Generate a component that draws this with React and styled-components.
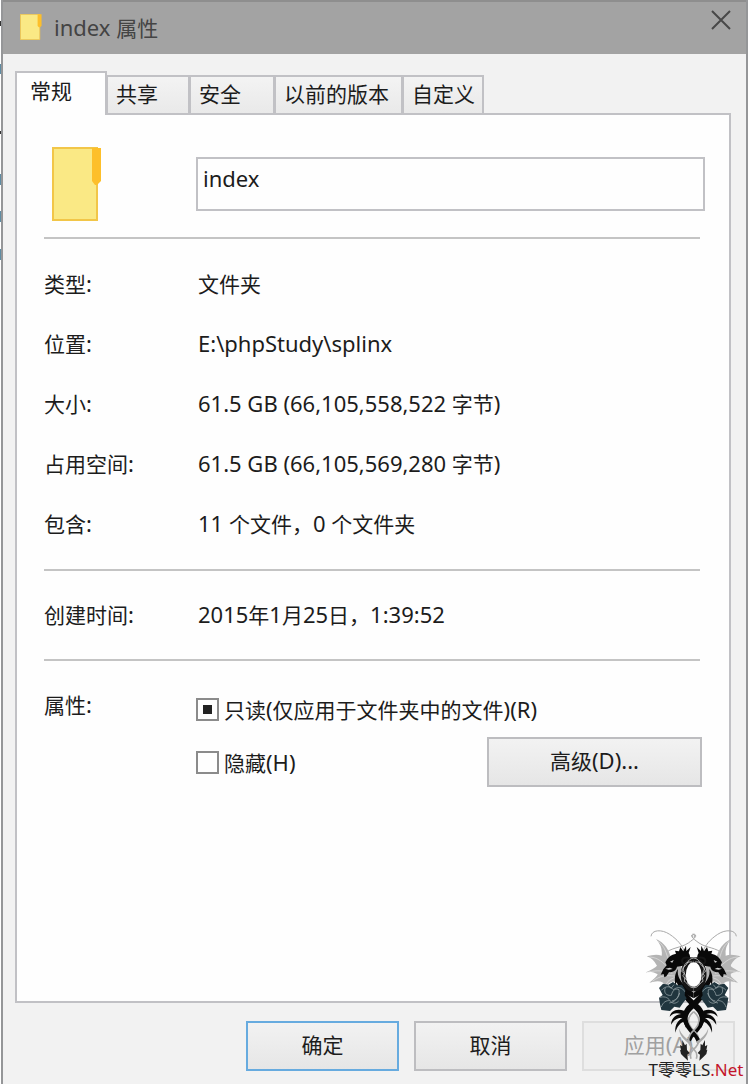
import React, { useEffect, useRef } from 'react';
import styled, { createGlobalStyle, css } from 'styled-components';

const GlobalStyle = createGlobalStyle`
  *, *::before, *::after { box-sizing: border-box; }
  body {
    margin: 0;
    background: #fff;
    color: #1c1c1c;
    font: 21px/30px "Noto Sans CJK SC", "Noto Sans", sans-serif;
  }
  button, input { font: inherit; color: inherit; }
`;

const line = '#c1c1c5';

const Desktop = styled.div`
  position: relative;
  display: grid;
  grid-template-columns: 1px minmax(0, 1fr) 2px;
  min-height: 100vh;
`;

const Behind = styled.div`
  background: linear-gradient(
    #fff 21px, #333 21px 26px, #fff 26px 64px, #5f8ca3 64px 74px, #fff 74px 131px,
    #333 131px 134px, #fff 134px 174px, #5f8ca3 174px 185px, #fff 185px 211px,
    #5f8ca3 211px 222px, #fff 222px 249px, #5f8ca3 249px 260px, #fff 260px
  );
`;

const Window = styled.main`
  display: flex;
  flex-direction: column;
  border: solid #959698;
  border-width: 0 2px;
  background: #f2f2f2;
`;

const TitleBar = styled.header`
  display: flex;
  align-items: center;
  gap: 12px;
  height: 54px;
  padding: 0 14px 2px 17px;
  border-top: 2px solid #8e8e8e;
  background: #a3a3a3;
  color: #444;
`;

const Title = styled.h1`
  flex: 1;
  margin: 0;
  font-size: 21px;
  font-weight: 400;
`;

const CloseButton = styled.button`
  display: flex;
  align-self: flex-start;
  margin-top: 7px;
  padding: 0;
  border: 0;
  background: none;
`;

const Body = styled.div`
  flex: 1;
  display: flex;
  flex-direction: column;
  padding: 17px 11px 13px 12px;
`;

const Tabs = styled.div`
  display: flex;
  align-items: flex-end;
  margin-bottom: -2px;
`;

const Tab = styled.button`
  height: 40px;
  margin-left: -1px;
  padding: 0 8px 4px;
  width: ${p => p.$width}px;
  border: 2px solid ${line};
  background: linear-gradient(#f3f3f3, #e9e9e9);
  text-align: left;
  white-space: nowrap;
  ${p => p.$active && css`
    z-index: 1;
    height: 44px;
    margin-left: 0;
    padding: 0 13px 8px;
    border-bottom: 0;
    background: #fefefe;
  `}
`;

const Panel = styled.section`
  flex: 1;
  margin-right: 4px;
  padding: 31px 24px 24px 27px;
  border: 2px solid ${line};
  background: #fefefe;
`;

const Row = styled.div`
  display: grid;
  grid-template-columns: 152px minmax(0, 1fr);
  align-items: center;
`;

const HeadRow = styled(Row)`
  height: 76px;
  margin-bottom: 15px;
`;

const FolderCell = styled.div`
  display: flex;
  padding-left: 8px;
`;

const NameInput = styled.input`
  width: 100%;
  height: 54px;
  padding: 0 5px 12px;
  border: 2px solid ${line};
  border-radius: 0;
  background: #fefefe;
  font-family: "Noto Sans", sans-serif;
  font-size: 22px;
  outline: 0;
`;

const Divider = styled.hr`
  height: 2px;
  margin: 0 5px 0 0;
  border: 0;
  background: #c4c4c4;
`;

const Facts = styled.dl`
  margin: 0;
  padding: ${p => p.$pad};
`;

const Fact = styled(Row)`
  height: 60px;
  dt, dd { margin: 0; }
  dd { padding-left: 2px; }
`;

const LatinText = styled.span`
  font-family: "Noto Sans", sans-serif;
  font-size: 22px;
`;

const Attributes = styled(Row)`
  align-items: start;
  padding-top: 28px;
`;

const Options = styled.div`
  display: flex;
  flex-direction: column;
  padding-top: 5px;
`;

const OptionRow = styled.div`
  display: flex;
  align-items: center;
  justify-content: space-between;
  height: ${p => p.$tall ? 50 : 30}px;
  margin-top: ${p => p.$tall ? 13 : 0}px;
  padding-right: 3px;
`;

const CheckLabel = styled.label`
  display: flex;
  align-items: center;
  gap: 5px;
  white-space: nowrap;
`;

const Check = styled.input`
  appearance: none;
  width: 23px;
  height: 23px;
  margin: 0;
  border: 2px solid #8b8b8b;
  background: #fefefe;
  &:indeterminate {
    background: linear-gradient(#222, #222) center / 9px 9px no-repeat #fefefe;
  }
`;

const PushButton = styled.button`
  width: ${p => p.$wide ? 215 : 153}px;
  height: 50px;
  padding: 0 0 4px;
  border: 2px solid ${p => p.$primary ? '#67abdf' : '#bdbdc0'};
  background: linear-gradient(#f2f2f2, #e6e6e6);
  &:disabled {
    border-color: #dedede;
    background: #efefef;
    color: #a0a0a0;
  }
`;

const Footer = styled.footer`
  display: flex;
  justify-content: flex-end;
  gap: 15px;
  padding-top: 18px;
`;

const Watermark = styled.div`
  position: absolute;
  right: 4px;
  bottom: 5px;
  display: flex;
  flex-direction: column;
  align-items: center;
  width: 100px;
  pointer-events: none;
`;

const Brand = styled.div`
  color: #222;
  font: 17px/18px "Noto Sans", "Noto Sans CJK SC", sans-serif;
  white-space: nowrap;
  b { color: #c4142b; font-weight: 400; }
`;

function Mixed({ children }) {
  return children.split(/([\x20-\x7e]+)/).filter(Boolean).map((part, i) =>
    /^[\x20-\x7e]+$/.test(part) ? <LatinText key={i}>{part}</LatinText> : part
  );
}

function CheckBox({ label, mixed }) {
  const box = useRef(null);
  useEffect(() => { box.current.indeterminate = Boolean(mixed); }, [mixed]);
  return (
    <CheckLabel>
      <Check ref={box} type="checkbox" />
      <span><Mixed>{label}</Mixed></span>
    </CheckLabel>
  );
}

function FolderIcon({ width, height }) {
  return (
    <svg width={width} height={height} viewBox="0 0 50 74" preserveAspectRatio="none" aria-hidden="true">
      <path d="M1 1h44v72H1z" fill="#fae985" stroke="#f2c648" strokeWidth="2" />
      <path d="M40 1h9v33l-4 4h-2l-3-4z" fill="#fdbf2a" />
    </svg>
  );
}

function DragonHalf() {
  return (
    <g id="dragon-half">
      <g fill="none" stroke="#a9a9a9" strokeWidth="3">
        <path d="M60 64C62 44 92 42 116 58c24 16 36 32 44 50" />
        <path d="M98 118c24-22 50-18 74-34 8-6 20-14 22-20 2-10-14-8-8 4" />
      </g>
      <path d="M75 72C100 82 115 105 120 130L150 150 160 190 148 205Q125 190 104 214 95 190 55 203 78 185 80 178 62 166 43 173 70 160 78 152 66 130 47 124 75 116 92 122 96 95 75 72z" fill="#b4b4b4" />
      <g fill="none" stroke="#e4e4e4" strokeWidth="2">
        <path d="M82 79c20 16 24 36 30 56M56 126c28 2 40 18 56 32M52 171c28-6 46-4 72 4M64 199c24-18 42-18 66-16M106 207c6-12 16-18 32-20" />
      </g>
      <path d="M97 163l10-12-4-9c7-15 18-23 32-26l-3-9 12 2 4-13 9 13 8-17 1 16 13-12-6 18c7 9 5 21-5 28-5 10-17 13-30 13-2 11-12 17-24 17l-8 12-6 3-2-10-9 2z" fill="#090909" />
      <path d="M117 140l11-5-4 8z" fill="#d0d0d0" />
      <path d="M103 161l14-3 8 4-12 2z" fill="#d0d0d0" />
      <path d="M141 162c-4 22 8 38 25 54l22 17v17c-24-12-42-22-51-48l-4 9c-3-20-2-34 8-49z" fill="#090909" />
      <path d="M188 134c-20 0-31 22-31 46s12 42 31 42" fill="none" stroke="#161616" strokeWidth="15" />
      <path d="M188 136c-12-10-30-12-34-2-4 12 10 18 20 8 6-6 10-8 14-8" fill="none" stroke="#161616" strokeWidth="6" />
      <path d="M188 129c-22 4-14 18-28 25-12 9 8 17-4 27 2 12 16 10 14 22 5 9 12 10 18 12M184 141c-28-2-20 12-32 28 18 10 8 20 8 30 10 4 14 20 28 19" fill="none" stroke="#f2f2f2" strokeWidth="2" />
      <path d="M141 219c18 6 30 20 48 38 25 18 34 35 31 54-2 23-18 38-35 57l-9 18-8-11c7-18 37-38 38-62 1-17-13-29-29-43l-35-38z" fill="#080808" />
      <path d="M188 290c-22 18-20 38 0 56 20 18 20 40 0 56-8 8-12 18-8 29" fill="none" stroke="#aaa" strokeWidth="5" />
      <path d="M159 287c-24-8-40 2-43 18 10-11 21-13 34-8-18 1-30 16-30 32 10-16 20-22 34-20-15 9-23 22-21 44 5-18 13-28 24-33l8 18 8-8-8-25z" fill="#090909" />
      <path d="M144 340c1 22 14 34 32 48l5-8c-16-9-30-20-37-40z" fill="#aaa" />
      <path d="M154 375l8 16 5-5 1 19 8 9-7 5 2 18-12-11-9-9-3-13 3 2-3-16 7 4z" fill="#222" />
      <path d="M84 219l12-13 16 3 14-8 14 10 13-2 10 16-2 16 6 9-11 14-10 14-16-3-13 13-26-3-4-17-3-20 11-8z" fill="#20353e" />
      <g fill="none" stroke="#a5b0b4" strokeWidth="2">
        <path d="M91 226c12-14 27-14 36-2 13-10 27-8 34 6M103 218c-6 15 3 25 18 23 4-17 12-21 23-17 2 18-6 31-21 34M85 248c13-5 25-2 32 9 7 10 17 10 26 1M146 234c-5 18-16 27-31 30M91 276c5-15 15-20 25-19M112 211l8 9 9-11" />
      </g>
    </g>
  );
}

const tabs = [
  ['常规', 92], ['共享', 84], ['安全', 86], ['以前的版本', 129], ['自定义', 82],
];

const facts = [
  ['类型:', '文件夹'],
  ['位置:', 'E:\\phpStudy\\splinx'],
  ['大小:', '61.5 GB (66,105,558,522 字节)'],
  ['占用空间:', '61.5 GB (66,105,569,280 字节)'],
  ['包含:', '11 个文件，0 个文件夹'],
];

export default function App() {
  return (
    <Desktop>
      <GlobalStyle />
      <Behind />
      <Window>
        <TitleBar>
          <FolderIcon width={22} height={26} />
          <Title><Mixed>index 属性</Mixed></Title>
          <CloseButton aria-label="关闭">
            <svg width="22" height="22" viewBox="0 0 22 22" fill="none" stroke="#484848" strokeWidth="2">
              <path d="M2 2l18 18M20 2L2 20" />
            </svg>
          </CloseButton>
        </TitleBar>
        <Body>
          <Tabs role="tablist">
            {tabs.map(([name, width], i) => (
              <Tab key={name} role="tab" aria-selected={i === 0} $active={i === 0} $width={width}>{name}</Tab>
            ))}
          </Tabs>
          <Panel role="tabpanel">
            <HeadRow>
              <FolderCell><FolderIcon width={50} height={74} /></FolderCell>
              <NameInput aria-label="名称" defaultValue="index" />
            </HeadRow>
            <Divider />
            <Facts $pad="14px 0 16px">
              {facts.map(([name, value]) => (
                <Fact key={name}><dt><Mixed>{name}</Mixed></dt><dd><Mixed>{value}</Mixed></dd></Fact>
              ))}
            </Facts>
            <Divider />
            <Facts $pad="13px 0 15px">
              <Fact><dt><Mixed>创建时间:</Mixed></dt><dd><Mixed>2015年1月25日，1:39:52</Mixed></dd></Fact>
            </Facts>
            <Divider />
            <Attributes>
              <span><Mixed>属性:</Mixed></span>
              <Options>
                <OptionRow><CheckBox mixed label="只读(仅应用于文件夹中的文件)(R)" /></OptionRow>
                <OptionRow $tall>
                  <CheckBox label="隐藏(H)" />
                  <PushButton $wide><Mixed>高级(D)...</Mixed></PushButton>
                </OptionRow>
              </Options>
            </Attributes>
          </Panel>
          <Footer>
            <PushButton $primary>确定</PushButton>
            <PushButton>取消</PushButton>
            <PushButton disabled><Mixed>应用(A)</Mixed></PushButton>
          </Footer>
        </Body>
      </Window>
      <Watermark>
        <svg width="100" height="132" viewBox="45 42 300 396" aria-hidden="true">
          <DragonHalf />
          <use href="#dragon-half" transform="translate(376 0) scale(-1 1)" />
        </svg>
        <Brand>T零零LS<b>.Net</b></Brand>
      </Watermark>
    </Desktop>
  );
}
